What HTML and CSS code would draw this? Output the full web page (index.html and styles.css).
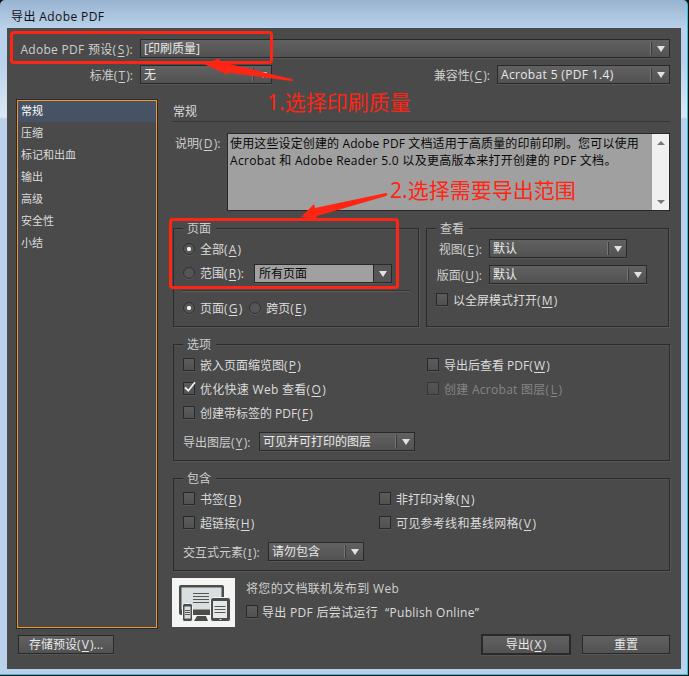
FILE: index.html
```html
<!DOCTYPE html>
<html lang="zh-CN">
<head>
<meta charset="utf-8">
<title>导出 Adobe PDF</title>
<link rel="stylesheet" href="styles.css">
</head>
<body>
<div class="window">
  <header class="titlebar">导出 Adobe PDF</header>
  <main class="dialog">
    <div class="row preset">
      <label class="lead wide">Adobe PDF 预设(<u>S</u>):</label>
      <div class="select grow"><span>[印刷质量]</span><i class="arrow"></i></div>
    </div>
    <div class="row standard">
      <label class="lead">标准(<u>T</u>):</label>
      <div class="select w132"><span>无</span><i class="arrow"></i></div>
      <label class="lead compat">兼容性(<u>C</u>):</label>
      <div class="select w173 latin"><span>Acrobat 5 (PDF 1.4)</span><i class="arrow"></i></div>
    </div>
    <div class="columns">
      <nav class="sidebar">
        <div class="item active">常规</div>
        <div class="item">压缩</div>
        <div class="item">标记和出血</div>
        <div class="item">输出</div>
        <div class="item">高级</div>
        <div class="item">安全性</div>
        <div class="item">小结</div>
      </nav>
      <section class="content">
        <h1 class="heading">常规</h1>
        <div class="description">
          <label>说明(<u>D</u>):</label>
          <div class="textarea">
            <p><span class="line1">使用这些设定创建的 Adobe PDF 文档适用于高质量的印前印刷。您可以使用</span><br><span class="line2">Acrobat 和 Adobe Reader 5.0 以及更高版本来打开创建的 PDF 文档。</span></p>
            <div class="scroll"><i class="up"></i><i class="down"></i></div>
          </div>
        </div>
        <div class="pair">
          <section class="group pages">
            <h2>页面</h2>
            <div class="choice"><i class="radio on"></i><span>全部(<u>A</u>)</span></div>
            <div class="choice range"><i class="radio"></i><span>范围(<u>R</u>):</span>
              <div class="select editable"><span>所有页面</span><i class="arrow"></i></div>
            </div>
            <div class="rule"></div>
            <div class="choice spread"><i class="radio on"></i><span>页面(<u>G</u>)</span><i class="radio"></i><span>跨页(<u>E</u>)</span></div>
          </section>
          <section class="group view">
            <h2>查看</h2>
            <div class="field"><label>视图(<u>E</u>):</label><div class="select w138"><span>默认</span><i class="arrow"></i></div></div>
            <div class="field second"><label>版面(<u>U</u>):</label><div class="select w158"><span>默认</span><i class="arrow"></i></div></div>
            <div class="choice full"><i class="check"></i><span>以全屏模式打开(<u>M</u>)</span></div>
          </section>
        </div>
        <section class="group options">
          <h2>选项</h2>
          <div class="checks">
            <div class="choice"><i class="check"></i><span>嵌入页面缩览图(<u>P</u>)</span></div>
            <div class="choice"><i class="check"></i><span>导出后查看 PDF(<u>W</u>)</span></div>
            <div class="choice"><i class="check"><svg class="tick" viewBox="0 0 14 14"><path d="M2 6.5 5.3 9.7 12 1.2"/></svg></i><span class="spaced">优化快速 Web 查看(<u>O</u>)</span></div>
            <div class="choice disabled"><i class="check"></i><span class="spaced">创建 Acrobat 图层(<u>L</u>)</span></div>
            <div class="choice"><i class="check"></i><span>创建带标签的 PDF(<u>F</u>)</span></div>
          </div>
          <div class="field"><label>导出图层(<u>Y</u>):</label><div class="select w156"><span>可见并可打印的图层</span><i class="arrow"></i></div></div>
        </section>
        <section class="group include">
          <h2>包含</h2>
          <div class="checks">
            <div class="choice"><i class="check"></i><span>书签(<u>B</u>)</span></div>
            <div class="choice"><i class="check"></i><span>非打印对象(<u>N</u>)</span></div>
            <div class="choice"><i class="check"></i><span>超链接(<u>H</u>)</span></div>
            <div class="choice"><i class="check"></i><span class="spaced">可见参考线和基线网格(<u>V</u>)</span></div>
          </div>
          <div class="field"><label>交互式元素(<u class="serif">I</u>):</label><div class="select w96"><span>请勿包含</span><i class="arrow"></i></div></div>
        </section>
        <div class="publish">
          <svg class="devices" viewBox="0 0 63 49">
            <rect width="63" height="49" fill="#f4f4f3"/>
            <rect x="7" y="7" width="45" height="30" rx="2" fill="#4b4d4b"/>
            <rect x="9.5" y="9.5" width="40" height="22" fill="#d9dfe1"/>
            <path d="M21 15.5h16M21 18.5h16M21 21.5h16M21 24.5h16" stroke="#555" stroke-width="1.2"/>
            <path d="M25 38h9l2 5H22z" fill="#4b4d4b"/>
            <rect x="10.5" y="25.5" width="10" height="18" rx="2" fill="#4b4d4b" stroke="#f4f4f3"/>
            <rect x="12.5" y="28.5" width="6" height="12" fill="#d9dfe1"/>
            <path d="M13 32.5h5M13 34.5h5M13 36.5h5" stroke="#555"/>
            <rect x="38.5" y="19.5" width="20" height="24" rx="2.5" fill="#4b4d4b" stroke="#f4f4f3"/>
            <rect x="41" y="23" width="14" height="17" fill="#e5e8e9"/>
            <path d="M42.5 28.5h11M42.5 31.5h11M42.5 34.5h11" stroke="#555" stroke-width="1.2"/>
            <path d="M47.5 41.5h2" stroke="#ddd"/>
          </svg>
          <div>
            <p>将您的文档联机发布到 Web</p>
            <div class="choice"><i class="check"></i><span class="online">导出 PDF 后尝试运行<b>“Publish Online”</b></span></div>
          </div>
        </div>
      </section>
    </div>
    <footer class="actions">
      <div class="button save">存储预设(<u>V</u>)...</div>
      <div class="button export">导出(<u>X</u>)</div>
      <div class="button reset">重置</div>
    </footer>
  </main>
  <div class="mark mark-preset"></div>
  <div class="mark mark-range"></div>
  <svg class="arrows" viewBox="0 0 689 676">
    <path d="M204 64 220 58 219 61.5 292 79Q295 81 291 81L227 72.500 228 75Z"/>
    <path d="M301 217 314 204 315 208 386 193Q389 194 386 196L317 216 316 219Z"/>
  </svg>
  <div class="note note-one">1.选择印刷质量</div>
  <div class="note note-two">2.选择需要导出范围</div>
</div>
</body>
</html>
```
FILE: styles.css
```css
* { box-sizing: border-box; }
body, h1, h2, p { margin: 0; font-weight: normal; font-size: inherit; }
body { width: 689px; height: 676px; overflow: hidden; background: #111;
  font: 12px/16px "Open Sans", "Noto Sans CJK SC", sans-serif; color: #dcdcdc; }
i { font-style: normal; flex: none; }
u { padding: 0 1.2px; text-underline-offset: 2px; text-decoration-thickness: 1px; }
label { color: #cecece; }
.window { position: relative; width: 688px; height: 675px; padding-left: 7px;
  border-right: 1px solid #2bc2dd; border-bottom: 1px solid #2bc2dd; border-radius: 5px 5px 0 0;
  background: linear-gradient(#99b4d1 0, #b9d1ea 28px, #b9d1ea 60px, #dce8f4 117px, #b9d1ea 119px); }
.titlebar { height: 28px; padding: 9px 0 0 4px; color: #111; white-space: nowrap; letter-spacing: .4px; }
.dialog { width: 674px; height: 641px; padding: 11px 11px 0 9px; background: #4a4a4a; white-space: nowrap; }
.row { display: flex; height: 26px; }
.lead { width: 124px; padding: 3px 7px 0 0; text-align: right; }
.wide { letter-spacing: .3px; }
.compat { width: 225px; }
.select { display: flex; flex: none; height: 19px; padding-left: 3px; line-height: 18px;
  border: 1px solid #292929; background: linear-gradient(#616161, #525252); box-shadow: 0 1px #565656; color: #e8e8e8; }
.select span { flex: 1; }
.select.grow { flex: 1; }
.latin { letter-spacing: .35px; }
.arrow { width: 18px; height: 13px; margin-top: 2px; border-left: 1px solid #3b3b3b; box-shadow: -1px 0 #747474; display: flex; }
.arrow::before { content: ""; margin: 4px 0 0 5px; border: 4px solid transparent; border-top: 6px solid #e2e2e2; border-bottom: 0; height: 0; }
.w132 { width: 132px; } .w173 { width: 173px; } .w138 { width: 138px; }
.w158 { width: 158px; } .w156 { width: 156px; } .w96 { width: 96px; }
.columns { display: flex; margin-top: 8px; gap: 15px; height: 530px; }
.sidebar { width: 140px; height: 528px; margin: 1px 0 0 1px; border: 1px solid #f0962e; box-shadow: 0 0 0 1px #292929; font-size: 11px; }
.item { height: 22px; padding: 3px 0 0 3px; }
.item.active { height: 21px; padding-top: 2px; background: #475365; color: #fff; }
.content { width: 498px; }
.heading { height: 23px; padding: 5px 0 0 1px; border-bottom: 1px solid #363636; }
.description { display: flex; height: 78px; margin-top: 11px; }
.description label { width: 55px; padding: 3px 0 0 3px; }
.textarea { display: flex; width: 443px; border: 1px solid #292929; background: #a0a0a0; color: #080808; }
.textarea p { width: 424px; padding: 1px 0 0 2px; line-height: 17px; }
.line1 { letter-spacing: .13px; }
.line2 { letter-spacing: .3px; }
.scroll { width: 17px; background: #f0f0f0; display: flex; flex-direction: column; justify-content: space-between; align-items: center; padding: 7px 0 6px; }
.up, .down { border: 4px solid transparent; border-bottom-color: #777; border-top: 0; }
.down { border-bottom: 0; border-top: 4px solid #777; }
.pair { display: flex; gap: 7px; margin-top: 17px; }
.group { margin-left: 1px; border: 1px solid #2b2b2b; box-shadow: 1px 1px #565656, inset 0 1px #515151; }
.group h2 { width: 33px; height: 16px; margin: -9px 0 0 9px; padding: 1px 0 0 4px; background: #4a4a4a; color: #cecece; }
.pages { width: 246px; height: 99px; }
.view { width: 243px; height: 99px; margin-left: 0; }
.choice { display: flex; align-items: center; height: 24px; }
.choice > span { margin-left: 5px; padding-top: 2px; }
.radio { width: 12px; height: 12px; border: 1px solid #303030; border-radius: 50%; background: #555; box-shadow: 0 1px #5b5b5b; }
.radio.on { background: radial-gradient(circle, #eee 0 1.8px, #555 2.5px); }
.pages .choice { padding-left: 9px; }
.pages > .choice:nth-child(2) { margin-top: 1px; }
.range > span { width: 46px; }
.editable { width: 138px; margin-left: 8px; padding-left: 4px; background: #a0a0a0; color: #080808; }
.editable .arrow { height: 17px; margin: 0; background: #555; box-shadow: none; border-color: #292929; }
.editable .arrow::before { margin-top: 6px; }
.rule { height: 2px; margin: 5px 8px 0; border-top: 1px solid #343434; background: #5b5b5b; }
.spread { margin-top: 4px; }
.spread .radio:nth-of-type(2) { margin-left: 7px; }
.field { display: flex; }
.field label { padding: 3px 7px 0 0; }
.view .field { margin-top: 3px; }
.view .field label { width: 62px; text-align: right; }
.view .field.second { margin-top: 7px; }
.full { margin-top: 4px; padding-left: 9px; }
.check { width: 12px; height: 13px; margin-top: -1px; border: 1px solid #292929; background: linear-gradient(#5c5c5c, #515151); box-shadow: 0 1px #575757; }
.tick { display: block; width: 14px; height: 14px; margin: -2px 0 0 -1px; overflow: visible; fill: none; stroke: #f1f1f1; stroke-width: 1.8; }
.checks { display: grid; grid-template-columns: 244px 1fr; padding-left: 9px; }
.options { height: 117px; margin-top: 17px; }
.options .checks { margin-top: 1px; }
.options .field { margin-top: 7px; }
.options .field label, .include .field label { width: 85px; padding-left: 9px; padding-right: 0; }
.disabled { color: #858585; }
.disabled .check { opacity: .6; }
.spaced { letter-spacing: .28px; }
.include { height: 93px; margin-top: 17px; }
.include .checks { grid-template-columns: 196px 1fr; margin-top: 1px; }
.include .field { margin-top: 7px; }
.include .field label { width: 94px; }
.serif { font-family: "Liberation Serif", serif; }
.publish { display: flex; gap: 11px; margin-top: 7px; }
.devices { width: 63px; height: 49px; }
.publish p { padding-top: 3px; letter-spacing: .35px; color: #cecece; }
.publish .choice { height: 28px; margin-top: 1px; }
.publish .choice > span { margin-left: 4px; }
.online { letter-spacing: .3px; }
.online b { padding-left: 7px; font-weight: normal; }
.actions { display: flex; align-items: center; margin-top: 4px; height: 22px; padding-left: 2px; }
.button { height: 19px; border: 1px solid #292929; background: linear-gradient(#616161, #525252); box-shadow: 0 1px #565656; text-align: center; color: #e8e8e8; line-height: 18px; }
.save { width: 96px; }
.export { width: 90px; height: 21px; border-width: 2px; margin-left: 367px; }
.reset { width: 88px; margin-left: 11px; }
.mark { position: absolute; border: 3px solid #ff2514; border-radius: 4px; }
.mark-preset { left: 10px; top: 31px; width: 263px; height: 33px; }
.mark-range { left: 169px; top: 218px; width: 230px; height: 71px; }
.arrows { position: absolute; left: 0; top: 0; width: 689px; height: 676px; fill: #ff2514; }
.note { position: absolute; font: 21px/28px "Noto Sans", "Noto Sans CJK SC", sans-serif; color: #ff2514; white-space: nowrap; }
.note-one { left: 267px; top: 88px; }
.note-two { left: 390px; top: 176px; }
```
